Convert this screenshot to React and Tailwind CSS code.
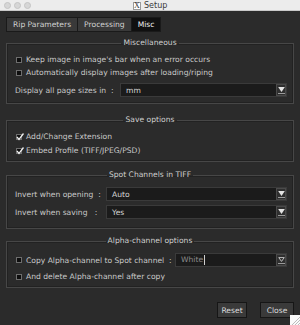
const font = { fontFamily: '"DejaVu Sans", Verdana, sans-serif' };

function Box({ checked }) {
  return (
    <span className="relative mr-[4px] inline-block h-[6px] w-[6px] shrink-0 border border-[#6e6e6e] bg-[#0e0e0e]">
      {checked && (
        <svg viewBox="0 0 8 8" className="absolute -left-[1px] -top-[2px] h-[8px] w-[8px]">
          <path d="M1 4 L3 6.5 L7.5 0.5" fill="none" stroke="#f2f2f2" strokeWidth="1.3" />
        </svg>
      )}
    </span>
  );
}

function Check({ label, checked, className = '' }) {
  return (
    <div className={`flex h-[13px] items-center pl-[9px] ${className}`}>
      <Box checked={checked} />
      <span className="whitespace-nowrap">{label}</span>
    </div>
  );
}

function Select({ value, className = '', placeholder }) {
  return (
    <div className={`flex h-[14px] items-center border border-[#3a3a3a] bg-[#1b1b1b] ${className}`}>
      <span className={`flex-1 whitespace-nowrap pl-[5px] ${placeholder ? 'text-[#8c8c8c]' : 'text-[#d6d6d6]'}`}>
        {value}
        {placeholder && <span className="ml-px inline-block h-[10px] w-px bg-[#cfcfcf] align-middle" />}
      </span>
      <span className="flex h-[12px] w-[10px] flex-col items-center justify-center border border-[#4a4a4a] bg-[#2f2f2f]">
        <svg viewBox="0 0 8 6" className="h-[5px] w-[7px]">
          {placeholder ? (
            <path d="M0.7 0.7 H7.3 L4 5.3 Z" fill="none" stroke="#d8d8d8" strokeWidth="1" />
          ) : (
            <path d="M0 0 H8 L4 6 Z" fill="#e4e4e4" />
          )}
        </svg>
        <span className="mt-[1px] h-px w-[7px] bg-[#9a9a9a]" />
      </span>
    </div>
  );
}

function Group({ title, className = '', children }) {
  return (
    <fieldset className={`mx-[6px] border border-[#474747] shadow-[inset_0_0_0_1px_#222] ${className}`}>
      <legend className="mx-auto px-[2px] text-[7.6px] leading-[8px] text-[#cfcfcf]">{title}</legend>
      {children}
    </fieldset>
  );
}

export default function App() {
  return (
    <div className="relative flex h-[325px] w-[300px] flex-col overflow-hidden bg-white text-[7.6px] leading-[9px] text-[#c9c9c9]" style={font}>
      <div className="relative flex h-[11px] shrink-0 items-center border-b border-[#c9c9c9] bg-[#ececec]">
        <div className="ml-[4px] flex gap-[3px]">
          <span className="h-[7px] w-[7px] rounded-full border border-[#c4c4c4] bg-[#d6d6d6]" />
          <span className="h-[7px] w-[7px] rounded-full border border-[#c4c4c4] bg-[#d6d6d6]" />
          <span className="h-[7px] w-[7px] rounded-full border border-[#c4c4c4] bg-[#d6d6d6]" />
        </div>
        <div className="absolute left-[133px] top-[1px] flex items-center gap-[3px]">
          <span className="flex h-[8px] w-[8px] items-center justify-center border border-[#9a9a9a] bg-white text-[8px] leading-none text-[#333]" style={{ fontFamily: '"Liberation Serif", serif' }}>X</span>
          <span className="text-[8px] leading-[9px] text-[#3a3a3a]">Setup</span>
        </div>
      </div>

      <div className="flex flex-1 flex-col bg-[#2b2b2b] pb-[7px]">
        <div className="ml-[6px] mt-[6px] flex h-[15px]">
          <div className="flex items-center border border-[#1a1a1a] bg-[#393939] px-[6px] text-[#d2d2d2]">Rip Parameters</div>
          <div className="flex items-center border border-l-0 border-[#1a1a1a] bg-[#393939] px-[6px] text-[#d2d2d2]">Processing</div>
          <div className="flex items-center border border-l-0 border-[#1a1a1a] bg-[#101010] px-[6px] text-[#f0f0f0]">Misc</div>
        </div>

        <Group title="Miscellaneous" className="mt-[7px] pb-[6px]">
          <Check className="mt-[6px]" label="Keep image in image's bar when an error occurs" />
          <Check label="Automatically display images after loading/riping" />
          <div className="mr-[6px] mt-[4px] flex items-center">
            <span className="w-[113px] whitespace-nowrap pl-[8px]">Display all page sizes in&nbsp;&nbsp;:</span>
            <Select value="mm" className="flex-1" />
          </div>
        </Group>

        <Group title="Save options" className="mt-[12px] pb-[4px]">
          <Check className="mt-[6px]" label="Add/Change Extension" checked />
          <Check className="mt-px" label="Embed Profile (TIFF/JPEG/PSD)" checked />
        </Group>

        <Group title="Spot Channels in TIFF" className="mt-[9px] pb-[9px]">
          <div className="mr-[6px] mt-[8px] flex items-center">
            <span className="w-[99px] whitespace-nowrap pl-[8px]">Invert when opening&nbsp;&nbsp;:</span>
            <Select value="Auto" className="flex-1" />
          </div>
          <div className="mr-[6px] mt-[4px] flex items-center">
            <span className="w-[99px] whitespace-nowrap pl-[8px]">Invert when saving&nbsp;&nbsp;&nbsp;:</span>
            <Select value="Yes" className="flex-1" />
          </div>
        </Group>

        <Group title="Alpha-channel options" className="mt-[8px] pb-[4px]">
          <div className="mr-[6px] mt-[8px] flex items-center">
            <div className="flex w-[168px] items-center pl-[9px]">
              <Box />
              <span className="whitespace-nowrap">Copy Alpha-channel to Spot channel&nbsp;&nbsp;:</span>
            </div>
            <Select value="White" placeholder className="flex-1" />
          </div>
          <Check className="mt-[3px]" label="And delete Alpha-channel after copy" />
        </Group>

        <div className="mr-[6px] mt-auto flex justify-end gap-[13px]">
          <button className="h-[16px] w-[30px] border border-[#161616] bg-[#3a3a3a] text-[7.6px] leading-[9px] text-[#dcdcdc]">Reset</button>
          <button className="h-[16px] w-[34px] border border-[#161616] bg-[#3a3a3a] text-[7.6px] leading-[9px] text-[#dcdcdc]">Close</button>
        </div>
      </div>

      <svg viewBox="0 0 10 10" className="absolute bottom-0 right-0 h-[10px] w-[10px]">
        <rect width="10" height="10" fill="#fafafa" />
        <path d="M2 10 L10 2 M5 10 L10 5 M8 10 L10 8" stroke="#a0a0a0" strokeWidth="0.7" />
      </svg>
    </div>
  );
}
